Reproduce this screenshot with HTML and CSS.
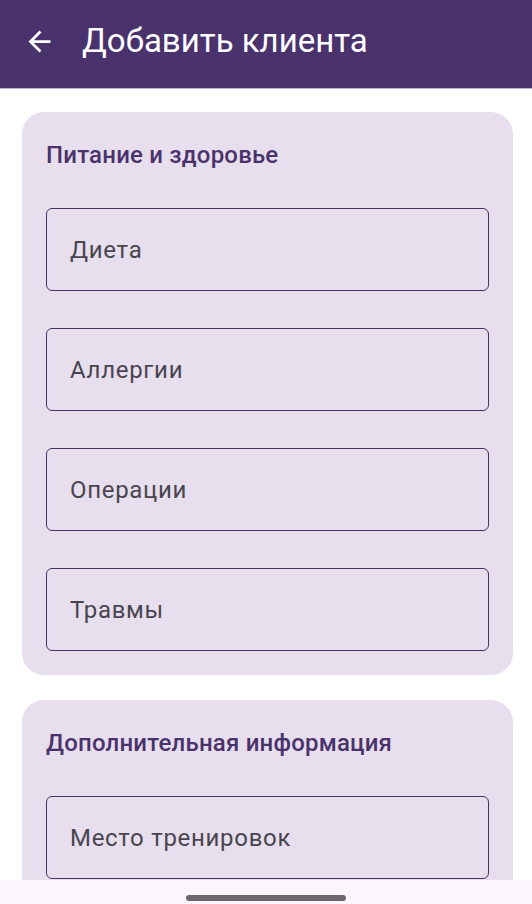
FILE: index.html
```html
<!DOCTYPE html>
<html lang="ru">
<head>
<meta charset="utf-8">
<link rel="stylesheet" href="styles.css">
</head>
<body>
<header class="topbar">
  <svg class="back" viewBox="0 0 24 24" width="33" height="33"><path d="M20 11H7.83l5.59-5.59L12 4l-8 8 8 8 1.41-1.41L7.83 13H20v-2z" fill="#ffffff"/></svg>
  <h1 class="title">Добавить клиента</h1>
</header>
<main class="content">
  <section class="card">
    <h2 class="card-title">Питание и здоровье</h2>
    <div class="fields">
      <div class="field"><span class="field-label">Диета</span></div>
      <div class="field"><span class="field-label">Аллергии</span></div>
      <div class="field"><span class="field-label">Операции</span></div>
      <div class="field"><span class="field-label">Травмы</span></div>
    </div>
  </section>
  <section class="card">
    <h2 class="card-title">Дополнительная информация</h2>
    <div class="fields">
      <div class="field"><span class="field-label">Место тренировок</span></div>
    </div>
  </section>
</main>
<div class="navbar"><div class="handle"></div></div>
</body>
</html>
```

FILE: styles.css
```css
* { box-sizing: border-box; }
html, body { margin: 0; padding: 0; }
body {
  width: 532px;
  height: 904px;
  overflow: hidden;
  background: #ffffff;
  font-family: Roboto, "Noto Sans", sans-serif;
  position: relative;
}
.topbar {
  height: 89px;
  background: #4a326c;
  border-bottom: 1px solid #b9b0c2;
  display: flex;
  align-items: center;
  padding: 0 0 6px 23px;
}
.back { display: block; flex: none; }
.title {
  margin: 0 0 0 26px;
  font-weight: 400;
  font-size: 33px;
  line-height: 40px;
  color: #ffffff;
  letter-spacing: 0;
}
.content {
  padding: 23px 19px 0 22px;
  display: flex;
  flex-direction: column;
  gap: 25px;
}
.card {
  background: #e7dfed;
  border-radius: 22px;
  padding: 24px;
  display: flex;
  flex-direction: column;
}
.card-title {
  margin: 0 0 34px;
  height: 38px;
  display: flex;
  align-items: center;
  font-weight: 500;
  font-size: 24px;
  color: #4a326c;
  letter-spacing: 0.2px;
}
.fields {
  display: flex;
  flex-direction: column;
  gap: 37px;
}
.field {
  height: 83px;
  border: 1.5px solid #4a326c;
  border-radius: 6px;
  display: flex;
  align-items: center;
  padding-left: 23px;
}
.field-label {
  font-size: 24px;
  color: #49454f;
  letter-spacing: 0.7px;
}
.navbar {
  position: absolute;
  left: 0;
  right: 0;
  bottom: 0;
  height: 24px;
  background: #fcf5fd;
  display: flex;
  justify-content: center;
  align-items: center;
}
.handle {
  width: 160px;
  height: 6px;
  border-radius: 3px;
  background: #6b686d;
  margin-top: 12px;
}
```
